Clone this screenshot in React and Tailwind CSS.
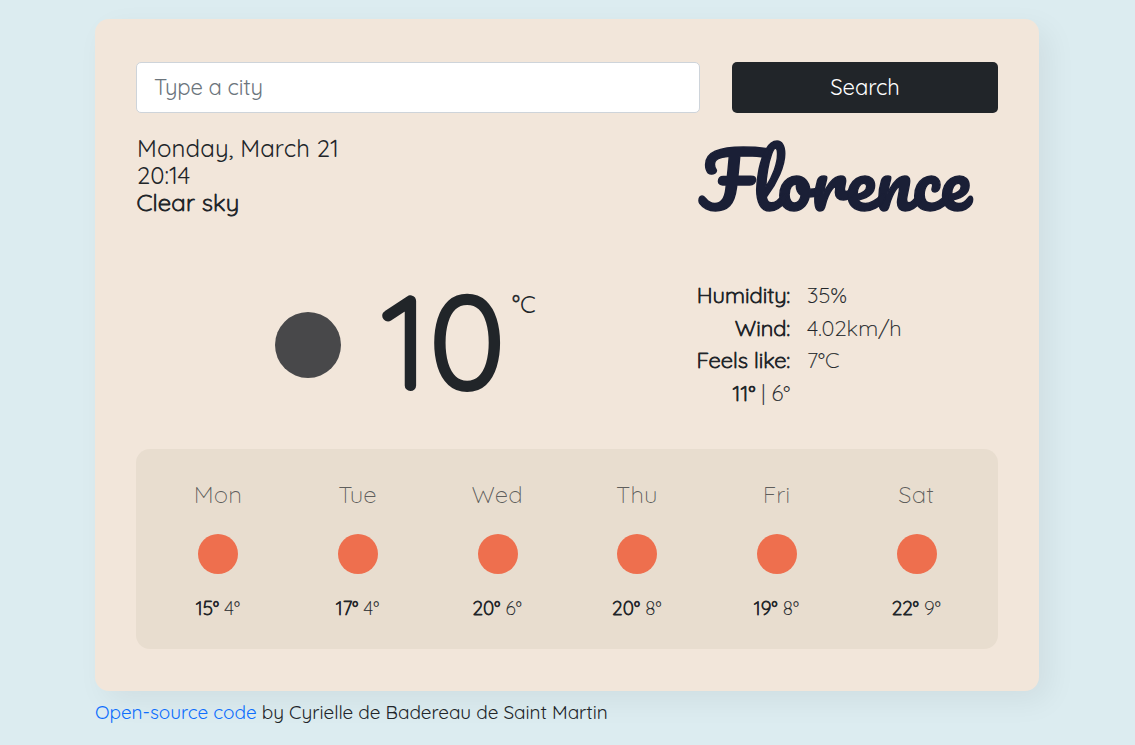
const forecast = [
  { day: "Mon", high: 15, low: 4 },
  { day: "Tue", high: 17, low: 4 },
  { day: "Wed", high: 20, low: 6 },
  { day: "Thu", high: 20, low: 8 },
  { day: "Fri", high: 19, low: 8 },
  { day: "Sat", high: 22, low: 9 },
];

const stats = [
  { label: "Humidity:", value: "35%" },
  { label: "Wind:", value: "4.02km/h" },
  { label: "Feels like:", value: "7°C" },
];

function SearchForm() {
  return (
    <form className="flex h-[51px] gap-8" onSubmit={(e) => e.preventDefault()}>
      <input
        className="w-[564px] rounded-[5px] border border-[#ced4da] bg-white px-[17px] text-[22px] font-normal tracking-[-0.2px] outline-none placeholder:text-[#6c757d]"
        placeholder="Type a city"
      />
      <button className="flex-1 rounded-[5px] bg-[#212529] text-[22px] font-normal tracking-[-0.1px] text-white">
        Search
      </button>
    </form>
  );
}

export default function App() {
  return (
    <div className="h-[745px] overflow-hidden bg-[#dcecf0] pl-[95px] pt-[19px] font-['Quicksand','Lato',sans-serif] font-light text-[#212529]">
      <main className="h-[672px] w-[944px] rounded-[14px] bg-[#f2e6da] px-[41px] pt-[43px] shadow-[10px_10px_30px_rgba(0,0,0,0.06)]">
        <SearchForm />
        <section className="flex h-[152px] justify-between pt-[22px]">
          <div className="text-[24px] font-normal leading-[27px]">
            <p className="pl-px tracking-[0.13px]">Monday, March 21</p>
            <p className="pl-px">20:14</p>
            <p className="pl-[0.5px] font-light tracking-[0.2px] [-webkit-text-stroke:0.9px_#212529]">Clear sky</p>
          </div>
          <h1 className="w-[299px] whitespace-nowrap font-['Pacifico','Lato',cursive] text-[75.3px] font-normal leading-[89px] text-[#1a1f36] [-webkit-text-stroke:1.4px_#1a1f36]">
            Florence
          </h1>
        </section>
        <section className="flex h-[184px]">
          <div className="flex w-[544px] pl-[139px]">
            <div className="mt-[47px] size-[66px] rounded-full bg-[#48484a]" />
            <div className="ml-[41px] mt-[5px] w-[130px] whitespace-nowrap text-[128px] font-light leading-[140px] tracking-[1px] [-webkit-text-stroke:6px_#212529]">10</div>
            <div className="mt-[26px] text-[24px] font-normal leading-[27px]">
              <span className="[-webkit-text-stroke:0.3px_#212529]">°</span>C
            </div>
          </div>
          <dl className="grid grid-cols-[110px_1fr] content-start gap-x-[17px] pt-[14px] text-[22px] leading-[32.5px]">
            {stats.map((s) => (
              <div key={s.label} className="contents">
                <dt className="text-right font-light [-webkit-text-stroke:0.9px_#212529]">{s.label}</dt>
                <dd className="[-webkit-text-stroke:0.15px_#212529]">{s.value}</dd>
              </div>
            ))}
            <dt className="text-right [-webkit-text-stroke:0.15px_#212529]">
              <strong className="font-light [-webkit-text-stroke:0.9px_#212529]">11°</strong> | 6°
            </dt>
          </dl>
        </section>
        <section className="grid h-[200px] w-[862px] grid-cols-6 rounded-[14px] bg-[#e8ddcf] px-[12px] pt-[30px] text-center">
          {forecast.map((f) => (
            <div key={f.day} className="flex flex-col items-center">
              <div className="text-[24px] leading-[30px] tracking-[0.15px] text-[#212529]/70">{f.day}</div>
              <div className="mt-[25px] ml-px size-10 rounded-full bg-[#ee6f4e]" />
              <div className="mt-[20px] text-[19px] leading-7 tracking-[0.1px] [-webkit-text-stroke:0.15px_#212529]">
                <strong className="font-light [-webkit-text-stroke:0.8px_#212529]">{f.high}°</strong> {f.low}°
              </div>
            </div>
          ))}
        </section>
      </main>
      <footer className="pt-[7px] text-[19px] font-normal leading-7 tracking-[-0.06px]">
        <a href="#" className="text-[#0d6efd]">Open-source code</a> by Cyrielle de Badereau de Saint Martin
      </footer>
    </div>
  );
}
